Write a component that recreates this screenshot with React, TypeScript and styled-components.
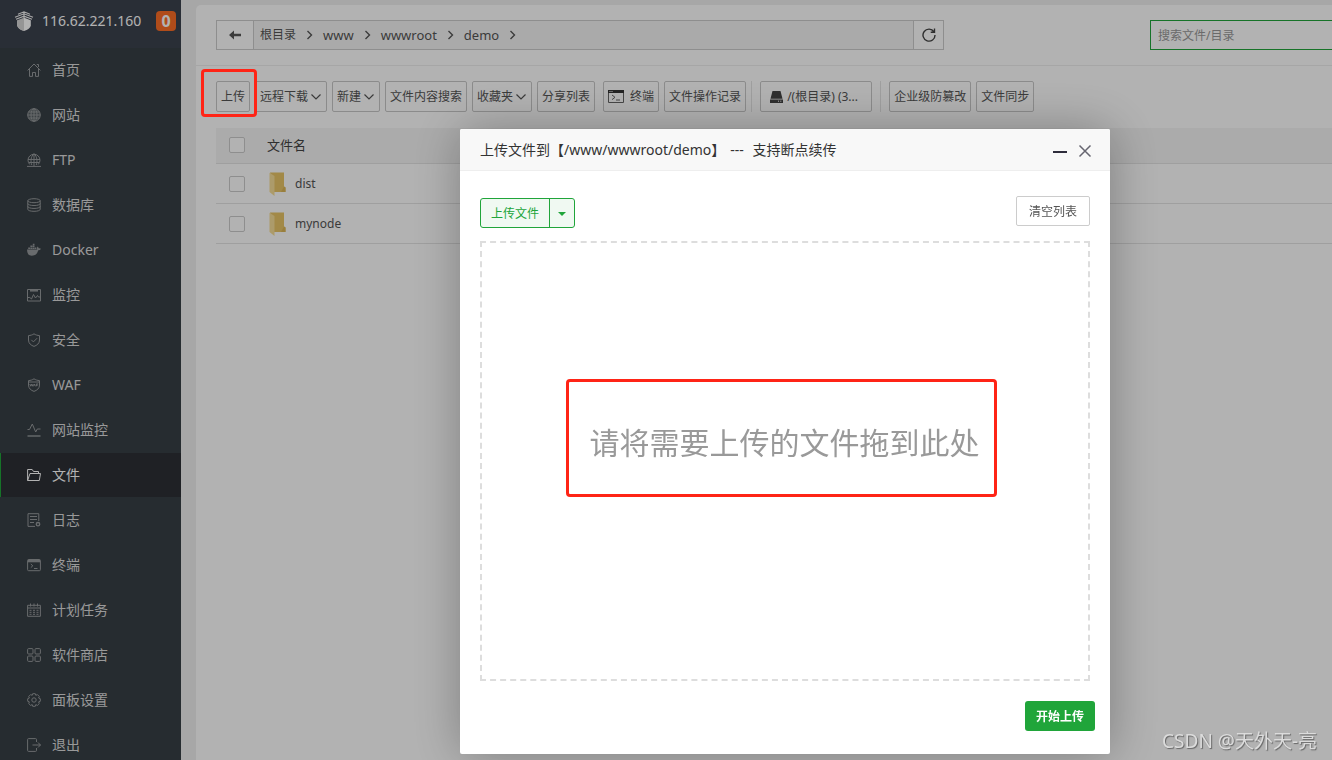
import React from "react";
import styled, { createGlobalStyle } from "styled-components";

const GlobalStyle = createGlobalStyle`
  * { box-sizing: border-box; }
  body {
    margin: 0;
    background: #f0f0f0;
    color: #555;
    font: 12px/18px "Noto Sans", "Noto Sans CJK SC", sans-serif;
  }
  button, input { font: inherit; color: inherit; margin: 0; }
  button { cursor: pointer; white-space: nowrap; }
  a { color: inherit; text-decoration: none; }
  svg { display: block; flex: none; }
`;

const Page = styled.div`
  display: flex;
  height: 100vh;
  overflow: hidden;
`;

/* ---------- sidebar ---------- */

const Sidebar = styled.aside`
  flex: none;
  width: 181px;
  background: #373f45;
  overflow: hidden;
`;

const Server = styled.div`
  display: flex;
  align-items: center;
  height: 48px;
  padding: 0 5px 6px 14px;
  background: #3c424e;
  color: #fff;
  font-size: 14px;
`;

const ServerAddress = styled.span`
  flex: 1;
  padding-left: 8px;
`;

const Badge = styled.span`
  width: 20px;
  height: 20px;
  border-radius: 4px;
  background: #fc6d26;
  font-size: 16px;
  font-weight: 700;
  line-height: 20px;
  text-align: center;
`;

const NavLink = styled.a<{ $active?: boolean }>`
  display: flex;
  align-items: center;
  gap: 11px;
  height: 44px;
  margin-bottom: 1px;
  padding-left: 26px;
  border-left: 1px solid ${(p) => (p.$active ? "#20a53a" : "transparent")};
  background: ${(p) => (p.$active ? "#2d3036" : "transparent")};
  color: ${(p) => (p.$active ? "#fff" : "#dcdcdc")};
  font-size: 14px;

  svg { color: ${(p) => (p.$active ? "#fff" : "#969a9c")}; }
`;

/* ---------- file manager ---------- */

const Panel = styled.main`
  flex: 1;
  min-width: 0;
  margin: 5px 0 0 15px;
  border-radius: 5px 0 0 0;
  background: #fff;
  overflow: hidden;
`;

const PathRow = styled.div`
  display: flex;
  padding: 15px 0 15px 20px;
  border-bottom: 1px solid #eee;
`;

const PathBar = styled.div`
  display: flex;
  flex: 1;
  height: 30px;
  margin-right: 206px;
  border: 1px solid #ccc;
  background: #f4f4f4;
`;

const PathButton = styled.button<{ $side: "left" | "right" }>`
  display: flex;
  align-items: center;
  justify-content: center;
  width: ${(p) => (p.$side === "left" ? "37px" : "30px")};
  padding: 0;
  border: 0 solid #ccc;
  border-${(p) => (p.$side === "left" ? "right" : "left")}-width: 1px;
  background: #fff;
`;

const Crumbs = styled.nav`
  display: flex;
  flex: 1;
  align-items: center;
  gap: 10px;
  padding-left: 6px;
`;

const Crumb = styled.a<{ $latin?: boolean }>`
  font-size: ${(p) => (p.$latin ? "13px" : "12px")};
`;

const Search = styled.input`
  width: 182px;
  height: 30px;
  padding: 0 7px;
  border: 1px solid #20a53a;
  border-right: 0;
  border-radius: 0;
  background: #fff;
  outline: 0;

  &::placeholder { color: #999; opacity: 1; }
`;

const Toolbar = styled.div`
  display: flex;
  gap: 5px;
  padding: 15px 20px 16px;
`;

const ToolButton = styled.button<{ $spaced?: boolean }>`
  display: flex;
  align-items: center;
  gap: 3px;
  height: 31px;
  margin-right: ${(p) => (p.$spaced ? "3px" : "0")};
  padding: 1px 4px 0;
  border: 1px solid #c8c8c8;
  border-radius: 2px;
  background: #fff;
`;

const MenuButton = styled(ToolButton)`
  padding-right: 5px;
`;

const TerminalButton = styled(ToolButton)`
  gap: 6px;
`;

const DiskButton = styled(ToolButton)`
  gap: 4px;
  width: 112px;
  padding: 1px 9px 0;
`;

const Separator = styled.span`
  width: 1px;
  margin-right: 3px;
  background: #e4e4e4;
`;

const Marked = styled.div`
  position: relative;
`;

const UploadMark = styled.span`
  position: absolute;
  inset: -12px -7px -5px -15px;
  z-index: 30;
  border: 3px solid #ff2416;
  border-radius: 4px;
  pointer-events: none;
`;

const FileTable = styled.table`
  width: calc(100% - 20px);
  margin-left: 20px;
  border-collapse: collapse;
  table-layout: fixed;
`;

const HeadCell = styled.th`
  height: 35px;
  padding: 0;
  border-bottom: 1px solid #e4e4e4;
  background: #f5f5f5;
  color: #444;
  font-size: 13px;
  font-weight: 400;
  text-align: left;
`;

const CheckHead = styled(HeadCell)`
  width: 51px;
`;

const Cell = styled.td`
  height: 40px;
  padding: 1px 0 0;
  border-bottom: 1px solid #e4e4e4;
`;

const Check = styled.input`
  display: block;
  appearance: none;
  width: 16px;
  height: 16px;
  margin: 0 0 0 13px;
  border: 1px solid #ccc;
  border-radius: 2px;
  background: #fff;
`;

const FileLink = styled.a`
  display: flex;
  align-items: center;
  gap: 9px;
  padding-left: 2px;
`;

/* ---------- upload dialog ---------- */

const Shade = styled.div`
  position: fixed;
  inset: 0;
  z-index: 10;
  padding: 129px 0 0 460px;
  background: rgba(0, 0, 0, 0.3);
  overflow: hidden;
`;

const Dialog = styled.section`
  width: 650px;
  border-radius: 2px;
  background: #fff;
  box-shadow: 1px 1px 50px rgba(0, 0, 0, 0.3);
`;

const DialogHead = styled.header`
  display: flex;
  align-items: center;
  height: 42px;
  padding: 0 18px 0 20px;
  border-bottom: 1px solid #eee;
  border-radius: 2px 2px 0 0;
  background: #f8f8f8;
`;

const DialogTitle = styled.h1`
  flex: 1;
  margin: 0;
  color: #333;
  font-size: 14px;
  font-weight: 400;
`;

const Dashes = styled.span`
  margin: 0 5px;
`;

const WindowButton = styled.button`
  padding: 2px 0 0;
  margin-left: 11px;
  border: 0;
  background: none;
  color: #2e2d3c;
`;

const DialogBody = styled.div`
  padding: 25px 20px 20px;
`;

const Actions = styled.div`
  display: flex;
  align-items: flex-start;
  justify-content: space-between;
  margin-bottom: 13px;
`;

const SplitButton = styled.div`
  display: flex;
  height: 30px;
  margin-top: 2px;
  border: 1px solid #20a53a;
  border-radius: 3px;
  background: #f0f9f2;
  color: #20a53a;
`;

const SplitPart = styled.button`
  padding: 2px 10px 0;
  border: 0;
  background: none;

  & + & {
    padding: 2px 8px 0;
    border-left: 1px solid #20a53a;
  }
`;

const ClearButton = styled.button`
  width: 74px;
  height: 30px;
  padding: 2px 0 0;
  border: 1px solid #ccc;
  border-radius: 2px;
  background: #fff;
`;

const DropArea = styled.div`
  display: flex;
  justify-content: center;
  height: 440px;
  padding-top: 136px;
  border: 2px dashed #ddd;
`;

const DropHint = styled.p`
  align-self: flex-start;
  height: 118px;
  margin: 0 8px 0 0;
  padding: 0 14px 0 21px;
  border: 3px solid #ff2416;
  border-radius: 4px;
  color: #999;
  font-size: 30px;
  line-height: 122px;
  white-space: nowrap;
`;

const DialogFoot = styled.footer`
  display: flex;
  justify-content: flex-end;
  padding: 0 15px 23px;
`;

const StartButton = styled.button`
  width: 70px;
  height: 30px;
  padding: 2px 0 0;
  border: 0;
  border-radius: 3px;
  background: #20a53a;
  color: #fff;
  font-weight: 700;
`;

const Watermark = styled.div`
  position: fixed;
  right: 15px;
  bottom: 6px;
  z-index: 20;
  color: #dcdcdc;
  font-size: 19px;
  line-height: 26px;
  text-shadow: 1px 1px 1px #666;
`;

/* ---------- icons ---------- */

const Line = ({ children }: { children: React.ReactNode }) => (
  <svg width="14" height="14" viewBox="0 0 14 14" fill="none" stroke="currentColor" strokeWidth="1" aria-hidden>
    {children}
  </svg>
);

const Logo = () => (
  <svg width="20" height="20" viewBox="0 0 20 20" aria-hidden>
    <path d="M3.2 8.2 10 6l6.800 2.200v6.600Q16 18 10 20q-6-2-6.800-5.200z" fill="#fff" />
    <path d="M3.200 8.200 10 6v14q-6-2-6.800-5.200z" fill="#d6d6d6" />
    <path d="M1 6.200 10 2.800l9 3.400M3 3.600l7-2.800 7 2.800M1.500 8.600 10 5.400l8.500 3.200" fill="none" stroke="#3c424e" strokeWidth="2.400" />
    <path d="M1 6.200 10 2.800l9 3.400M4 3.200l6-2.400 6 2.400M2 8.200l8-3 8 3M10 1v6" fill="none" stroke="#f2f2f2" strokeWidth="1.100" />
  </svg>
);

const icons: Record<string, React.ReactNode> = {
  home: <Line><path d="M.6 7.400 7 1l6.400 6.400M2.500 6v7.400h3V9.500h3v3.900h3V6M9.800 1.500h1.700V4" /></Line>,
  globe: <Line><circle cx="7" cy="7" r="6.300" fill="currentColor" fillOpacity=".35" /><ellipse cx="7" cy="7" rx="3" ry="6.300" /><path d="M7 .7v12.600M.7 7h12.600M1.500 4h11M1.500 10h11" /></Line>,
  ftp: <Line><path d="M2.800 11.500A6 6 0 1 1 11.200 11.500M1 6.500h12M2 9.500h10M7 .7V13M0 13.400h14" /><path d="M4.800 12C3.500 9 3.600 3.500 7 .8c3.400 2.700 3.500 8.200 2.200 11.200" /></Line>,
  db: <Line><ellipse cx="7" cy="2.700" rx="6.200" ry="2" /><path d="M.8 2.700v8.600c0 2.700 12.400 2.700 12.400 0V2.700M.8 5.500c0 2.700 12.400 2.700 12.400 0M.8 8.400c0 2.700 12.400 2.700 12.400 0" /></Line>,
  docker: (
    <svg width="14" height="14" viewBox="0 0 14 14" fill="currentColor" aria-hidden>
      <path d="M0 6.500h10.200q-.8-1.600.3-3 1 .7 1.200 1.800 1.300-.3 2.300.4-.8 1.500-2.700 1.500-1.700 5.600-6.500 5.600Q0 12.800 0 6.500z" />
      <path d="M1.200 4.400h1.900v1.700H1.200zM3.400 4.400h1.900v1.700H3.400zM5.600 4.400h1.900v1.700H5.600zM7.800 4.400h1.600v1.700H7.800zM3.400 2.500h1.900v1.600H3.400zM5.600 2.500h1.900v1.600H5.600zM5.800.8h1.700v1.400H5.800z" />
    </svg>
  ),
  monitor: <Line><path d="M.5 1.500h13v11.500H.5zM.8 9.500h2L4.500 11 6.500 6.500 8.500 10 10.500 7.500l1 1.500h1.700" /><path d="M3 2.800h8" strokeWidth="1.500" /></Line>,
  shield: <Line><path d="M7 .8C5.500 2 3.500 2.400 1.500 2.600V7c0 3.500 2.500 5.300 5.500 6.400 3-1.100 5.500-2.900 5.500-6.400V2.600C10.500 2.400 8.500 2 7 .8zM4.300 6.800l2.100 2.100 3.700-3.700" /></Line>,
  waf: <Line><path d="M7 .8C5.500 2 3.500 2.400 1.500 2.600V7c0 3.500 2.500 5.300 5.500 6.400 3-1.100 5.500-2.900 5.500-6.400V2.600C10.500 2.400 8.500 2 7 .8zM2 4h10M2.800 6l.9 2.200L4.500 6l.8 2.200.9-2.200M6.500 8.300l.9-2.200.9 2.200M9.300 8.300V6h1.900M9.300 7.200h1.500" /></Line>,
  pulse: <Line><path d="M.5 6.500h2L5.300 1l3.400 8 1.600-3h3.200" /><path d="M.5 13h13" strokeWidth="1.400" /></Line>,
  folder: <Line><path d="M.6 12.500V1.500h4.600l1.300 2h5v2M.6 12.500 3 5.500h10.500l-1.200 7z" /></Line>,
  log: <Line><path d="M8 13.400H1V.7h10.800V8M3 3.500h7M3 6.500h7M3 9.500h4" /><circle cx="11" cy="11.200" r="1.700" strokeWidth="1.400" /></Line>,
  terminal: <Line><rect x=".6" y="1.500" width="12.800" height="11.200" rx="1" /><path d="M1 3h12" strokeWidth="2.600" /><path d="M3.800 6l2 1.800-2 1.800M7 10.500h3.500" /></Line>,
  calendar: <Line><path d="M.6 2.300h12.800v11H.6zM.6 5h12.800M3.500.5v3M7 .5v3M10.500.5v3" /><path d="M2.500 7.300h9M2.500 9.300h9M2.500 11.300h9" strokeDasharray="2 1.500" /></Line>,
  store: <Line><rect x=".6" y=".6" width="5.400" height="5.400" rx="1" /><rect x="8" y=".6" width="5.400" height="5.400" rx="1" /><rect x=".6" y="8" width="5.400" height="5.400" rx="1" /><rect x="8" y="8" width="5.400" height="5.400" rx="1" /></Line>,
  gear: <Line><path d="M5.700.7h2.600l.5 1.600 1.600-.7 1.900 1.900-.7 1.500 1.700.7v2.600l-1.700.6.7 1.600-1.900 1.900-1.600-.8-.5 1.700H5.700l-.5-1.700-1.600.8-1.900-1.900.7-1.600L.7 8.300V5.700L2.400 5l-.7-1.500 1.900-1.900 1.600.7z" /><circle cx="7" cy="7" r="2.200" /></Line>,
  exit: <Line><path d="M9.500 4V1.600q0-1-1-1h-7q-.9 0-.9 1v10.800q0 1 .9 1h7q1 0 1-1V10M5.500 7h8M11 4.500 13.500 7 11 9.500" /></Line>,
};

const ChevronDown = () => (
  <svg width="10" height="6" viewBox="0 0 10 6" fill="none" stroke="currentColor" strokeWidth="1.200" aria-hidden>
    <path d="M.5.500 5 5 9.500.5" />
  </svg>
);

const ChevronRight = () => (
  <svg width="7" height="10" viewBox="0 0 7 10" fill="none" stroke="currentColor" strokeWidth="1.400" aria-hidden>
    <path d="M1.500 1 5.500 5 1.500 9" />
  </svg>
);

const FolderIcon = () => (
  <svg width="17" height="24" viewBox="0 0 17 24" aria-hidden>
    <path d="M1 .5h14v14l1.500 1v4.500H5z" fill="#e8c466" />
    <path d="M15 14.500l1.500 1v4.500H12z" fill="#dcb658" />
    <path d="M.5.800 5.500 4v20L.5 20z" fill="#f7de98" />
  </svg>
);

const menu: [string, string][] = [
  ["home", "首页"], ["globe", "网站"], ["ftp", "FTP"], ["db", "数据库"],
  ["docker", "Docker"], ["monitor", "监控"], ["shield", "安全"], ["waf", "WAF"],
  ["pulse", "网站监控"], ["folder", "文件"], ["log", "日志"], ["terminal", "终端"],
  ["calendar", "计划任务"], ["store", "软件商店"], ["gear", "面板设置"], ["exit", "退出"],
];

const crumbs = ["根目录", "www", "wwwroot", "demo"];
const files = ["dist", "mynode"];

export default function App() {
  return (
    <>
      <GlobalStyle />
      <Page>
        <Sidebar>
          <Server>
            <Logo />
            <ServerAddress>116.62.221.160</ServerAddress>
            <Badge>0</Badge>
          </Server>
          <nav>
            {menu.map(([icon, label]) => (
              <NavLink key={icon} href="#" $active={icon === "folder"}>
                {icons[icon]}
                {label}
              </NavLink>
            ))}
          </nav>
        </Sidebar>

        <Panel>
          <PathRow>
            <PathBar>
              <PathButton $side="left" aria-label="返回">
                <svg width="12" height="10" viewBox="0 0 12 10" aria-hidden>
                  <path d="M0 5 5 .500v3.300h7v2.400H5v3.300z" fill="#555" />
                </svg>
              </PathButton>
              <Crumbs>
                {crumbs.map((name, i) => (
                  <React.Fragment key={name}>
                    <Crumb href="#" $latin={i > 0}>{name}</Crumb>
                    <ChevronRight />
                  </React.Fragment>
                ))}
              </Crumbs>
              <PathButton $side="right" aria-label="刷新">
                <svg width="14" height="14" viewBox="0 0 14 14" fill="none" stroke="#444" strokeWidth="1.400" aria-hidden>
                  <path d="M12 3.800A6 6 0 1 0 13 7M12.500.500v3.800H8.700" />
                </svg>
              </PathButton>
            </PathBar>
            <Search type="text" placeholder="搜索文件/目录" aria-label="搜索文件/目录" />
          </PathRow>

          <Toolbar>
            <Marked>
              <ToolButton>上传</ToolButton>
              <UploadMark />
            </Marked>
            <MenuButton>远程下载<ChevronDown /></MenuButton>
            <MenuButton>新建<ChevronDown /></MenuButton>
            <ToolButton>文件内容搜索</ToolButton>
            <MenuButton>收藏夹<ChevronDown /></MenuButton>
            <ToolButton $spaced>分享列表</ToolButton>
            <TerminalButton>
              <svg width="16" height="14" viewBox="0 0 16 14" fill="none" stroke="#666" aria-hidden>
                <path d="M.5.500h15v12H.5z" />
                <path d="M0 1.500h16" stroke="#333" strokeWidth="3" />
                <path d="M1.500 1.500h1M3.500 1.500h1" stroke="#fff" />
                <path d="M4 5l3 2.300-3 2.300M8 10h4" />
              </svg>
              终端
            </TerminalButton>
            <ToolButton>文件操作记录</ToolButton>
            <Separator />
            <DiskButton $spaced>
              <svg width="13" height="12" viewBox="0 0 13 12" fill="#444" aria-hidden>
                <path d="M2.500 0h8l2 7.800H.5zM0 8.500h13V12H0z" />
                <path d="M8 10.200h1M10.300 10.200h1" stroke="#fff" />
              </svg>
              /(根目录) (3...
            </DiskButton>
            <Separator />
            <ToolButton>企业级防篡改</ToolButton>
            <ToolButton>文件同步</ToolButton>
          </Toolbar>

          <FileTable>
            <thead>
              <tr>
                <CheckHead><Check type="checkbox" aria-label="全选" /></CheckHead>
                <HeadCell>文件名</HeadCell>
              </tr>
            </thead>
            <tbody>
              {files.map((name) => (
                <tr key={name}>
                  <Cell><Check type="checkbox" aria-label={name} /></Cell>
                  <Cell><FileLink href="#"><FolderIcon />{name}</FileLink></Cell>
                </tr>
              ))}
            </tbody>
          </FileTable>
        </Panel>
      </Page>

      <Shade>
        <Dialog role="dialog" aria-labelledby="upload-title">
          <DialogHead>
            <DialogTitle id="upload-title">
              上传文件到【/www/wwwroot/demo】<Dashes>---</Dashes> 支持断点续传
            </DialogTitle>
            <WindowButton aria-label="最小化">
              <svg width="14" height="14" viewBox="0 0 14 14" aria-hidden>
                <path d="M0 7h14v2H0z" fill="currentColor" />
              </svg>
            </WindowButton>
            <WindowButton aria-label="关闭">
              <svg width="14" height="14" viewBox="0 0 14 14" fill="none" stroke="#666570" strokeWidth="1.500" aria-hidden>
                <path d="M1.500 1.500l11 11M12.500 1.500l-11 11" />
              </svg>
            </WindowButton>
          </DialogHead>
          <DialogBody>
            <Actions>
              <SplitButton>
                <SplitPart>上传文件</SplitPart>
                <SplitPart aria-label="更多上传方式">
                  <svg width="8" height="4" viewBox="0 0 8 4" aria-hidden>
                    <path d="M0 0h8L4 4z" fill="currentColor" />
                  </svg>
                </SplitPart>
              </SplitButton>
              <ClearButton>清空列表</ClearButton>
            </Actions>
            <DropArea>
              <DropHint>请将需要上传的文件拖到此处</DropHint>
            </DropArea>
          </DialogBody>
          <DialogFoot>
            <StartButton>开始上传</StartButton>
          </DialogFoot>
        </Dialog>
      </Shade>
      <Watermark>CSDN @天外天-亮</Watermark>
    </>
  );
}
